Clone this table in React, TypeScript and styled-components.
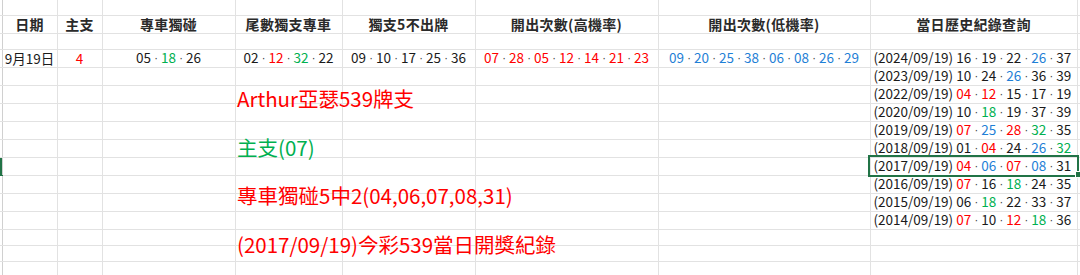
import React from 'react'
import styled, { createGlobalStyle } from 'styled-components'

const GlobalStyle = createGlobalStyle`
  html, body {
    margin: 0;
    padding: 0;
    background: #ffffff;
    overflow: hidden;
  }

  body {
    font-family: "Noto Sans CJK TC", "Noto Sans", sans-serif;
    color: #1a1a1a;
  }
`;

const ink = {
  k: '#1a1a1a',
  r: '#ff0000',
  g: '#00b050',
  b: '#1f7fd6',
};

type Ink = keyof typeof ink;

const Sheet = styled.div`
  position: relative;
  width: 1080px;
  height: 275px;
  overflow: hidden;
`;

const Grid = styled.table`
  border-collapse: collapse;
  table-layout: fixed;
  width: 1100px;
`;

const Row = styled.tr<{ $h: number }>`
  height: ${(p) => p.$h}px;
`;

const Gutter = styled.td<{ $active?: boolean }>`
  padding: 0;
  border-right: 1px solid #d0d0d0;
  border-bottom: 1px solid ${(p) => (p.$active ? '#217346' : '#e2e2e2')};
  background: ${(p) => (p.$active ? '#217346' : '#ffffff')};
`;

const Cell = styled.td<{ $align?: 'left' | 'center'; $selected?: boolean }>`
  position: relative;
  padding: ${(p) => (p.$align === 'left' ? '0 0 0 3px' : '0')};
  border-right: 1px solid #e2e2e2;
  border-bottom: 1px solid #e2e2e2;
  text-align: ${(p) => p.$align || 'center'};
  white-space: nowrap;
  overflow: visible;
  font-size: 13.5px;
  line-height: 15px;
  vertical-align: middle;
  color: ${ink.k};
  ${(p) =>
    p.$selected &&
    `
    outline: 2px solid #217346;
    outline-offset: 0px;

    &::after {
      content: '';
      position: absolute;
      right: -5px;
      bottom: -3px;
      width: 5px;
      height: 5px;
      background: #217346;
      border: 1px solid #ffffff;
    }
  `}
`;

const HeadCell = styled(Cell)`
  font-size: 14px;
  font-weight: 700;
  color: #2a2a2a;
  letter-spacing: 0.3px;
`;

const Num = styled.span<{ $ink: Ink }>`
  color: ${(p) => ink[p.$ink]};
`;

const Sep = styled.span`
  display: inline-block;
  width: 10px;
  text-align: center;
  font-family: "DejaVu Sans", sans-serif;
  font-size: 10px;
  color: #333333;
`;

const Note = styled.div`
  position: absolute;
  top: 74px;
  left: 237px;
  display: flex;
  flex-direction: column;
  font-size: 20.5px;
  line-height: 48.7px;
  white-space: nowrap;
`;

const NoteLine = styled.div<{ $ink: Ink }>`
  color: ${(p) => ink[p.$ink]};
`;

const widths = [2, 55, 45, 133, 107, 133, 183, 212, 207, 23];

const headers = [
  '日期',
  '主支',
  '專車獨碰',
  '尾數獨支專車',
  '獨支5不出牌',
  '開出次數(高機率)',
  '開出次數(低機率)',
  '當日歷史紀錄查詢',
];

// prefix r / g / b marks a coloured number
const today = ['05 g18 26', '02 r12 g32 22', '09 10 17 25 36', 'r07 r28 r05 r12 r14 r21 r23', 'b09 b20 b25 b38 b06 b08 b26 b29'];

const history: [string, string][] = [
  ['2024', '16 19 22 b26 37'],
  ['2023', '10 24 b26 36 39'],
  ['2022', 'r04 r12 15 17 19'],
  ['2020', '10 g18 19 37 39'],
  ['2019', 'r07 b25 r28 g32 35'],
  ['2018', '01 r04 24 b26 g32'],
  ['2017', 'r04 b06 r07 b08 31'],
  ['2016', 'r07 16 g18 24 35'],
  ['2015', '06 g18 22 33 37'],
  ['2014', 'r07 10 r12 g18 36'],
];

const notes: [Ink, string][] = [
  ['r', 'Arthur亞瑟539牌支'],
  ['g', '主支(07)'],
  ['r', '專車獨碰5中2(04,06,07,08,31)'],
  ['r', '(2017/09/19)今彩539當日開獎紀錄'],
];

function Numbers({ list }: { list: string }) {
  const items = list.split(' ');
  return (
    <>
      {items.map((t, i) => {
        const tone = /^[rgb]/.test(t) ? (t[0] as Ink) : 'k';
        const value = tone === 'k' ? t : t.slice(1);
        return (
          <React.Fragment key={i}>
            {i > 0 && <Sep>‧</Sep>}
            <Num $ink={tone}>{value}</Num>
          </React.Fragment>
        );
      })}
    </>
  );
}

function Record({ year, list }: { year: string; list: string }) {
  return (
    <>
      ({year}/09/19) <Numbers list={list} />
    </>
  );
}

function EmptyCells() {
  return (
    <>
      {widths.slice(1).map((_, i) => (
        <Cell key={i} />
      ))}
    </>
  );
}

export default function App() {
  return (
    <Sheet>
      <GlobalStyle />
      <Grid>
        <colgroup>
          {widths.map((w, i) => (
            <col key={i} style={{ width: w }} />
          ))}
        </colgroup>
        <tbody>
          <Row $h={15}>
            <Gutter />
            <EmptyCells />
          </Row>
          <Row $h={18}>
            <Gutter />
            {headers.map((h) => (
              <HeadCell key={h}>{h}</HeadCell>
            ))}
            <Cell />
          </Row>
          <Row $h={16}>
            <Gutter />
            <EmptyCells />
          </Row>
          <Row $h={16}>
            <Gutter />
            <Cell>9月19日</Cell>
            <Cell>
              <Num $ink="r">4</Num>
            </Cell>
            {today.map((t, i) => (
              <Cell key={i}>
                <Numbers list={t} />
              </Cell>
            ))}
            <Cell $align="left">
              <Record year={history[0][0]} list={history[0][1]} />
            </Cell>
            <Cell />
          </Row>
          {history.slice(1).map(([year, list]) => {
            const selected = year === '2017';
            return (
              <Row $h={16} key={year}>
                <Gutter $active={selected} />
                {widths.slice(1, 8).map((_, i) => (
                  <Cell key={i} />
                ))}
                <Cell $align="left" $selected={selected}>
                  <Record year={year} list={list} />
                </Cell>
                <Cell />
              </Row>
            );
          })}
          {[0, 1, 2, 3, 4].map((i) => (
            <Row $h={16} key={'blank' + i}>
              <Gutter />
              <EmptyCells />
            </Row>
          ))}
        </tbody>
      </Grid>
      <Note>
        {notes.map(([tone, text]) => (
          <NoteLine key={text} $ink={tone}>
            {text}
          </NoteLine>
        ))}
      </Note>
    </Sheet>
  );
}
